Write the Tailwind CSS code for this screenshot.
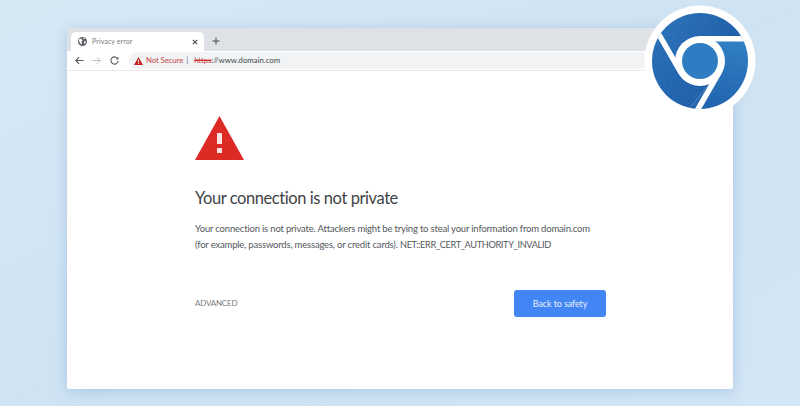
<!DOCTYPE html>
<html>
    <head>
        <title>Privacy error</title>
        <script src="https://cdn.jsdelivr.net/npm/@tailwindcss/browser@4"></script>
    </head>
    <body class="relative w-[800px] h-[406px] overflow-hidden bg-gradient-to-br from-[#d8e9f6] via-[#cfe3f3] to-[#d3e6f5] font-['Lato',sans-serif]">
        <div class="pt-[28px] pl-[67px]">
            <div class="flex flex-col w-[666px] h-[361px] bg-white rounded-[2px] overflow-hidden shadow-[0_2px_14px_rgba(120,165,205,0.45)]">
                <!-- tab strip -->
                <div class="flex items-end h-[23px] shrink-0 pl-[4px] bg-[#dee1e6]">
                    <div class="flex items-center h-[19px] w-[133px] pl-[7px] pr-[6px] bg-white rounded-t-[5px]">
                        <svg class="w-[9px] h-[9px] shrink-0" viewBox="0 0 10 10">
                            <circle cx="5" cy="5" r="5" fill="#5f6368" />
                            <path d="M1 2.500 3.400 2 5 3.600 3.800 5.200 4.600 7.400 3.400 8 1.600 5.800ZM6 .8 7.600 1.200 7 2.600 5.800 2ZM6.600 5 8.800 4.600 8.200 7 6.800 7.600Z" fill="#fff" />
                        </svg>
                        <span class="ml-[5px] text-[7px] tracking-[0.1px] text-[#777b80]">Privacy error</span>
                        <svg class="ml-auto w-[6px] h-[6px]" viewBox="0 0 6 6">
                            <path d="M.8.8 5.200 5.200M5.200.8.8 5.200" stroke="#4a4d52" stroke-width="1.100" />
                        </svg>
                    </div>
                    <svg class="ml-[8px] mb-[6px] w-[8px] h-[8px]" viewBox="0 0 8 8">
                        <path d="M4 .5V7.500M.5 4H7.500" stroke="#44474b" stroke-width="1" />
                    </svg>
                </div>
                <!-- toolbar -->
                <div class="flex items-center h-[20px] shrink-0 pl-[8px] border-b border-[#e6e8ea]">
                    <svg class="w-[9px] h-[9px] shrink-0" viewBox="0 0 10 10" fill="none">
                        <path d="M9.500 5H1M4.600 1.200.9 5 4.600 8.800" stroke="#55585c" stroke-width="1.200" />
                    </svg>
                    <svg class="ml-[8px] w-[9px] h-[9px] shrink-0" viewBox="0 0 10 10" fill="none">
                        <path d="M.5 5H9M5.400 1.200 9.100 5 5.400 8.800" stroke="#b6b9bd" stroke-width="1" />
                    </svg>
                    <svg class="ml-[9px] w-[9px] h-[9px] shrink-0" viewBox="0 0 10 10" fill="none">
                        <path d="M8.600 3.200A4 4 0 1 0 9 5.500" stroke="#55585c" stroke-width="1.200" />
                        <path d="M9.300.8V3.800H6.300Z" fill="#55585c" />
                    </svg>
                    <div class="flex items-center ml-[10px] h-[17px] w-[520px] pl-[5px] bg-[#f1f3f4] rounded-full">
                        <svg class="w-[9px] h-[8px] shrink-0" viewBox="0 0 9 8">
                            <path d="M4.500 0 9 8H0Z" fill="#c5221f" />
                            <path d="M4.500 2.800V5.200M4.500 5.900V6.900" stroke="#fff" stroke-width="1" />
                        </svg>
                        <span class="ml-[3px] text-[7.800px] tracking-[-0.1px] text-[#c5484a]">Not Secure</span>
                        <span class="ml-[3px] text-[7.800px] text-[#66696d]">|</span>
                        <span class="ml-[6px] text-[7.800px] tracking-[-0.1px] text-[#c5484a] line-through decoration-[#d93025]">https</span>
                        <span class="text-[7.800px] text-[#44474b]">://www.domain.com</span>
                    </div>
                </div>
                <!-- interstitial -->
                <div class="flex-1 pl-[128px] pr-[127px] pt-[45px]">
                    <svg class="block w-[49px] h-[44px]" viewBox="0 0 49 44">
                        <path d="M24.500 0 49 44H0Z" fill="#dd2a25" />
                        <rect x="22" y="17" width="5" height="11" fill="#fbe4e2" />
                        <rect x="22" y="32" width="5" height="5" fill="#fbe4e2" />
                    </svg>
                    <h1 class="mt-[26px] text-[16.500px] tracking-[-0.43px] leading-[24px] text-[#3f4347]">Your connection is not private</h1>
                    <p class="mt-[11px] text-[9.500px] tracking-[-0.19px] leading-[16px] text-[#54585c] whitespace-nowrap">
                        Your connection is not private. Attackers might be trying to steal your information from domain.com<br />
                        (for example, passwords, messages, or credit cards). <span class="text-[9.200px] tracking-[-0.35px]">NET::ERR_CERT_AUTHORITY_INVALID</span>
                    </p>
                    <div class="flex items-center justify-between mt-[37px]">
                        <span class="mb-[2px] text-[8px] tracking-[-0.2px] text-[#777b7f]">ADVANCED</span>
                        <button class="w-[92px] h-[27px] bg-[#4285f4] rounded-[3px] text-[9px] tracking-[-0.1px] text-[#e6effd]">Back to safety</button>
                    </div>
                </div>
            </div>
        </div>
        <!-- logo badge over the window corner -->
        <svg class="absolute left-[640px] top-0 w-[120px] h-[120px]" viewBox="640 0 120 120">
            <defs>
                <clipPath id="disc"><circle cx="700" cy="61" r="48" /></clipPath>
                <linearGradient id="topSeg" x1="0" y1="0" x2="1" y2="0.3">
                    <stop offset="0" stop-color="#2f78bd" />
                    <stop offset="1" stop-color="#1c5aa6" />
                </linearGradient>
                <linearGradient id="rightSeg" x1="0.5" y1="0" x2="0.4" y2="1">
                    <stop offset="0" stop-color="#2f7fc4" />
                    <stop offset="1" stop-color="#1c5ba8" />
                </linearGradient>
                <linearGradient id="leftSeg" x1="0" y1="0" x2="0.8" y2="1">
                    <stop offset="0" stop-color="#2a74ba" />
                    <stop offset="1" stop-color="#1c5ba7" />
                </linearGradient>
                <filter id="grain" x="0" y="0" width="100%" height="100%">
                    <feTurbulence type="fractalNoise" baseFrequency="0.9" numOctaves="2" seed="4" />
                    <feColorMatrix values="0 0 0 0 0.08  0 0 0 0 0.28  0 0 0 0 0.58  1.6 0 0 0 -0.7" />
                </filter>
            </defs>
            <circle cx="700" cy="61" r="55.500" fill="#fff" />
            <g clip-path="url(#disc)">
                <path d="M700 39H760V0H640V0L659 33L681 72Z" fill="url(#topSeg)" />
                <path d="M700 39H760V120H680L719 72Z" fill="url(#rightSeg)" />
                <path d="M681 72 640 0V120H680L719 72Z" fill="url(#leftSeg)" />
                <rect x="640" y="0" width="120" height="120" filter="url(#grain)" opacity="0.5" />
            </g>
            <circle cx="700" cy="61" r="25" fill="#fff" />
            <circle cx="700" cy="61" r="18" fill="#2e7cc1" />
            <g clip-path="url(#disc)" stroke="#fff" stroke-width="5.500">
                <path d="M700 38.750H760" />
                <path d="M719.270 72.100 686 130" />
                <path d="M680.730 72.100 647 14" />
            </g>
        </svg>
    </body>
</html>
